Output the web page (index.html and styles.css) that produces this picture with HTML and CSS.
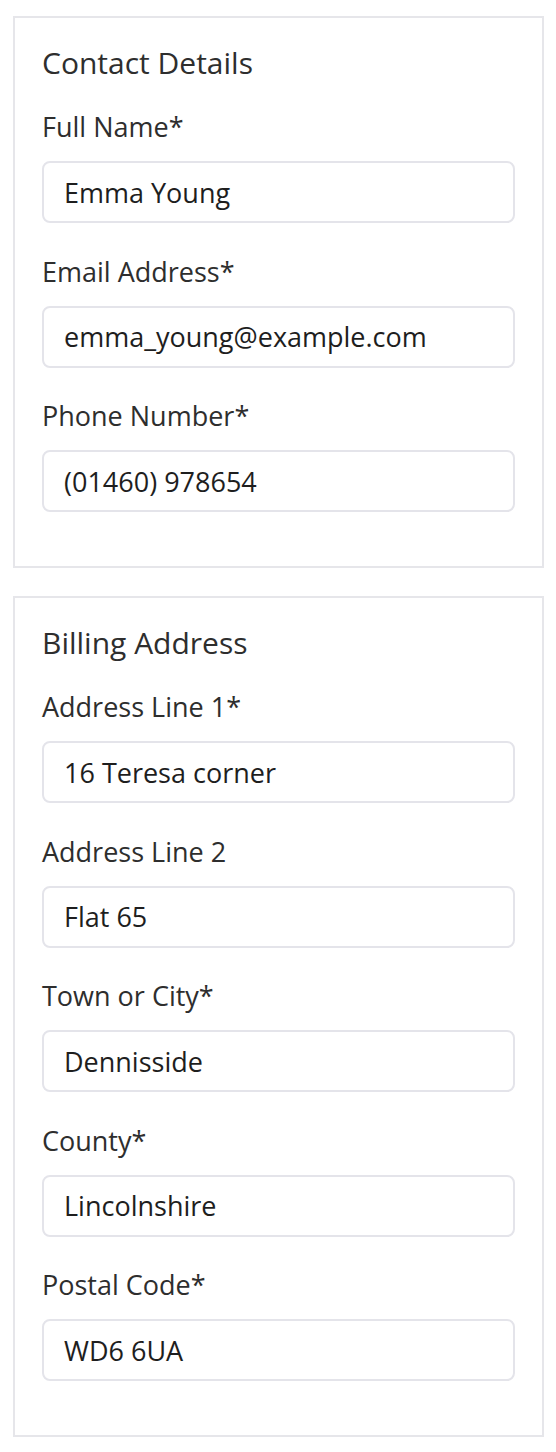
FILE: index.html
```html
<!DOCTYPE html>
<html lang="en">
<head>
<meta charset="utf-8">
<title>Checkout</title>
<link rel="stylesheet" href="styles.css">
</head>
<body>
<div class="page">
  <section class="card">
    <h2 class="card-title">Contact Details</h2>
    <div class="fields">
      <div class="field">
        <label class="label">Full Name*</label>
        <input class="input" type="text" value="Emma Young">
      </div>
      <div class="field">
        <label class="label">Email Address*</label>
        <input class="input" type="text" value="emma_young@example.com">
      </div>
      <div class="field">
        <label class="label">Phone Number*</label>
        <input class="input" type="text" value="(01460) 978654">
      </div>
    </div>
  </section>
  <section class="card">
    <h2 class="card-title">Billing Address</h2>
    <div class="fields">
      <div class="field">
        <label class="label">Address Line 1*</label>
        <input class="input" type="text" value="16 Teresa corner">
      </div>
      <div class="field">
        <label class="label">Address Line 2</label>
        <input class="input" type="text" value="Flat 65">
      </div>
      <div class="field">
        <label class="label">Town or City*</label>
        <input class="input" type="text" value="Dennisside">
      </div>
      <div class="field">
        <label class="label">County*</label>
        <input class="input" type="text" value="Lincolnshire">
      </div>
      <div class="field">
        <label class="label">Postal Code*</label>
        <input class="input" type="text" value="WD6 6UA">
      </div>
    </div>
  </section>
</div>
</body>
</html>
```

FILE: styles.css
```css
* { box-sizing: border-box; }
html, body { margin: 0; padding: 0; background: #ffffff; }
body {
  font-family: "Open Sans", "Noto Sans", sans-serif;
  color: #2e2e2e;
}
.page {
  display: flex;
  flex-direction: column;
  gap: 28px;
  padding: 16px 12px 0 13px;
}
.card {
  border: 2px solid #e6e6ea;
  padding: 25px 27px 54px 27px;
}
.card-title {
  margin: 0 0 26px 0;
  font-size: 30px;
  line-height: 40px;
  font-weight: 400;
  color: #2e2e2e;
}
.fields {
  display: flex;
  flex-direction: column;
  gap: 30.5px;
}
.field {
  display: flex;
  flex-direction: column;
  gap: 16px;
}
.label {
  font-size: 27px;
  line-height: 36px;
  color: #2e2e2e;
}
.input {
  display: block;
  width: 100%;
  height: 62px;
  border: 2px solid #e4e4ea;
  border-radius: 8px;
  padding: 0 20px;
  font-family: "Open Sans", "Noto Sans", sans-serif;
  font-size: 27px;
  color: #1e1e1e;
  background: #ffffff;
  outline: none;
}
```
